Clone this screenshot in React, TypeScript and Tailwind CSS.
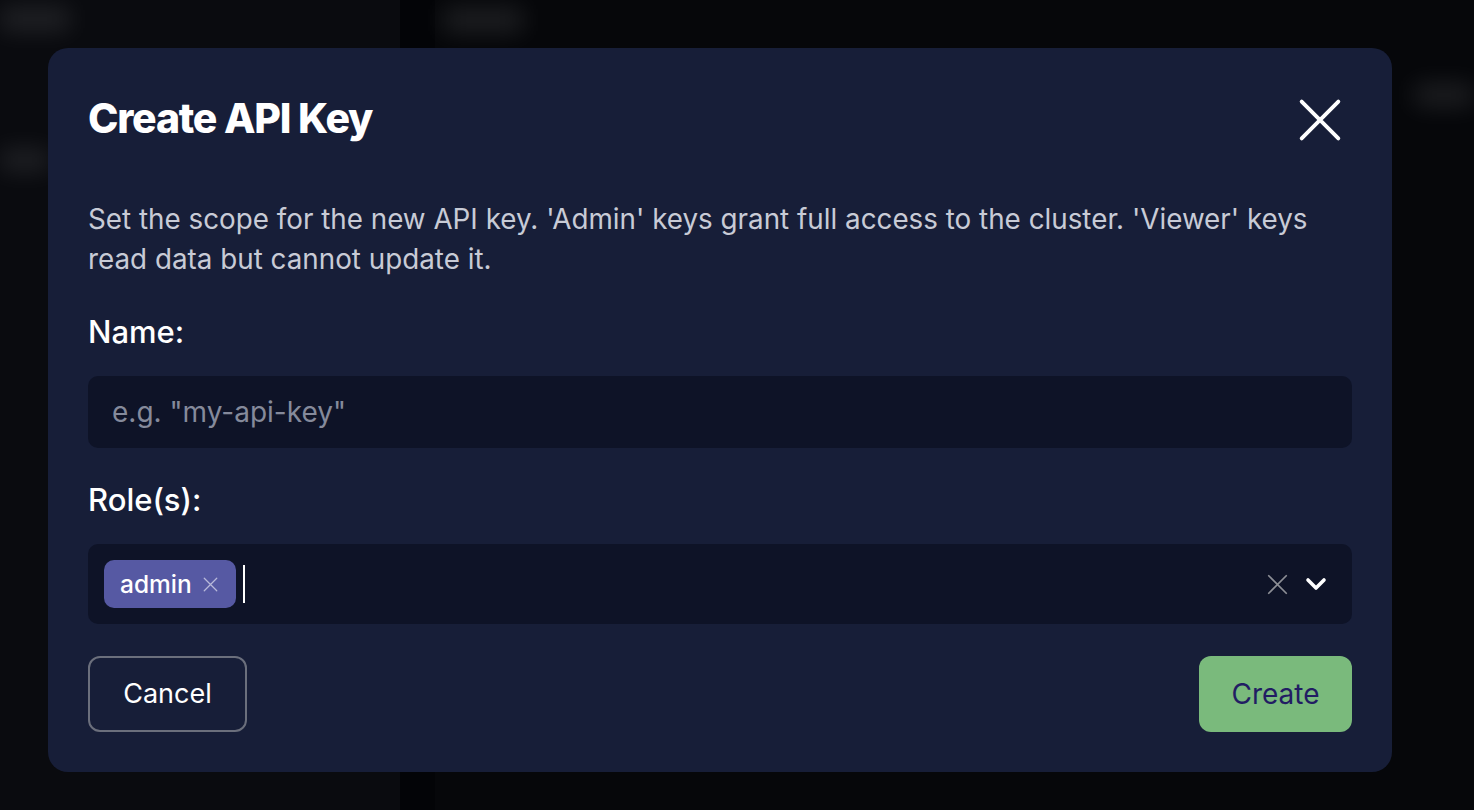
import React from 'react';

const font = { fontFamily: 'Inter, "Noto Sans", sans-serif' };

const CloseIcon: React.FC<{ className?: string; strokeWidth?: number }> = ({ className, strokeWidth = 2 }) => (
  <svg className={className} viewBox="0 0 24 24" fill="none" stroke="currentColor" strokeWidth={strokeWidth} strokeLinecap="round" strokeLinejoin="round">
    <path d="M2 2l20 20M22 2L2 22" />
  </svg>
);

const Chevron: React.FC<{ className?: string }> = ({ className }) => (
  <svg className={className} viewBox="0 0 24 24" fill="none" stroke="currentColor" strokeWidth={3.6} strokeLinecap="round" strokeLinejoin="round">
    <path d="M4 8l8 8 8-8" />
  </svg>
);

export default function App() {
  return (
    <div className="relative w-[1474px] h-[810px] overflow-hidden bg-[#040508]" style={font}>
      {/* blurred page behind the dialog */}
      <div className="flex h-full">
        <div className="w-[400px] h-full bg-[#0a0b0f] relative">
          <div className="absolute left-0 top-[8px] w-[70px] h-[22px] rounded bg-white/10 blur-md" />
          <div className="absolute left-0 top-[150px] w-[50px] h-[20px] rounded bg-white/10 blur-md" />
        </div>
        <div className="w-[35px] h-full bg-[#030407]" />
        <div className="flex-1 h-full bg-[#06070a] relative">
          <div className="absolute left-[8px] top-[8px] w-[80px] h-[24px] rounded bg-white/10 blur-md" />
          <div className="absolute right-0 top-[84px] w-[60px] h-[22px] rounded bg-white/10 blur-md" />
        </div>
      </div>

      {/* dialog */}
      <div className="absolute left-[48px] top-[48px] w-[1344px] h-[724px] rounded-[20px] bg-[#171e38] px-[40px] pt-[42px] flex flex-col">
        <div className="flex items-center justify-between h-[56px]">
          <h2 className="text-[41px] font-extrabold text-white tracking-[-0.03em] leading-none">Create API Key</h2>
          <button className="text-white mr-[10px] mt-[3px]" aria-label="Close">
            <CloseIcon className="w-[44px] h-[44px]" strokeWidth={2.1} />
          </button>
        </div>

        <p className="mt-[53px] text-[27.8px] leading-[40px] text-[#c8cbd6]">
          Set the scope for the new API key. 'Admin' keys grant full access to the cluster. 'Viewer' keys read data but cannot update it.
        </p>

        <label className="mt-[33px] text-[31px] leading-[40px] font-medium text-white">Name:</label>
        <div className="mt-[24px] h-[72px] rounded-[10px] bg-[#0e1327] flex items-center px-[24px]">
          <span className="text-[28px] text-[#858a9b]">e.g. "my-api-key"</span>
        </div>

        <label className="mt-[32px] text-[31px] leading-[40px] font-medium text-white">Role(s):</label>
        <div className="mt-[24px] h-[80px] rounded-[10px] bg-[#0e1327] flex items-center pl-[16px] pr-[24px]">
          <span className="h-[48px] rounded-[10px] bg-[#5659a3] flex items-center pl-[16px] pr-[18px] gap-[11px]">
            <span className="text-[24.5px] text-white font-medium">admin</span>
            <CloseIcon className="w-[15px] h-[15px] text-[#b8b9da]" strokeWidth={2} />
          </span>
          <span className="ml-[7px] w-[2px] h-[38px] bg-white" />
          <div className="flex-1" />
          <CloseIcon className="w-[21px] h-[21px] text-[#8c8e95]" strokeWidth={2} />
          <Chevron className="ml-[16px] w-[24px] h-[24px] text-white" />
        </div>

        <div className="mt-[32px] flex items-center justify-between">
          <button className="h-[76px] w-[159px] rounded-[12px] border-2 border-[#6b6f7c] text-[27px] text-white">Cancel</button>
          <button className="h-[76px] w-[153px] rounded-[12px] bg-[#7aba7c] text-[28px] text-[#221d63]">Create</button>
        </div>
      </div>
    </div>
  );
}
